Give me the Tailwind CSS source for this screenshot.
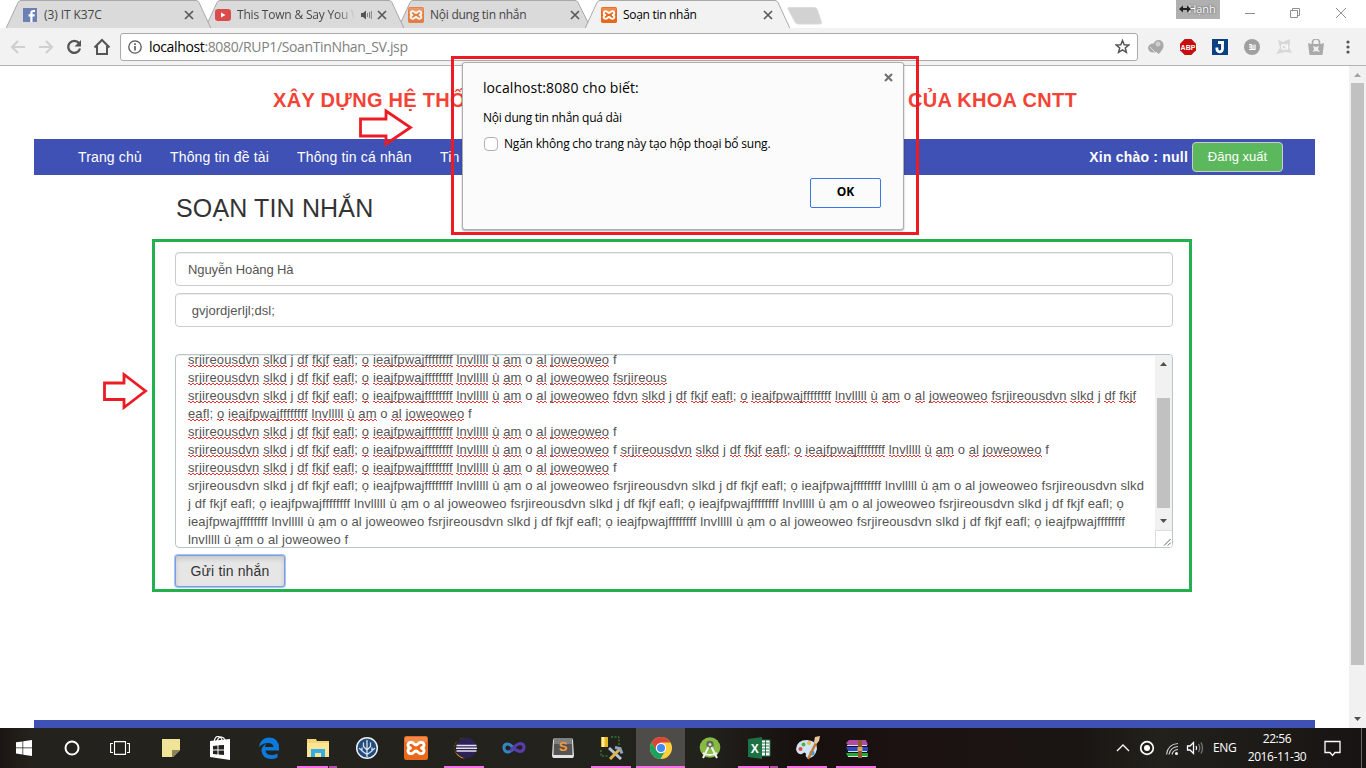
<!DOCTYPE html>
<html lang="vi">
<head>
<meta charset="utf-8">
<title>Soạn tin nhắn</title>
<script src="https://cdn.jsdelivr.net/npm/@tailwindcss/browser@4"></script>
</head>
<body class="relative flex h-[768px] w-[1366px] flex-col overflow-hidden bg-white font-['Liberation_Sans',sans-serif]">

<svg width="0" height="0" class="absolute">
  <defs>
    <symbol id="xampp" viewBox="0 0 24 24">
      <rect width="24" height="24" rx="2.500" fill="#e8681c"/>
      <path d="M1 1h22v5q-11 3-22 0z" fill="#f29a62" opacity=".7"/>
      <path d="M8 6.500C3 5.500 3 11 6.500 12C3 13 3 18.500 8 17.500C10 17 10.500 15 12 15C13.500 15 14 17 16 17.500C21 18.500 21 13 17.500 12C21 11 21 5.500 16 6.500C14 7 13.500 9 12 9C10.500 9 10 7 8 6.500z" fill="none" stroke="#fff" stroke-width="2.900" stroke-linejoin="round"/>
    </symbol>
    <symbol id="close" viewBox="0 0 10 10"><path d="M1 1l8 8M9 1l-8 8" stroke="#5a5a5a" stroke-width="1.700"/></symbol>
  </defs>
</svg>

<!-- tab strip -->
<header class="relative h-7 shrink-0 font-['Open_Sans','Noto_Sans',sans-serif] text-xs text-[#444]">
  <svg class="absolute left-0 top-0" width="1366" height="29" viewBox="0 0 1366 29">
    <g stroke="#a9a9a9" fill="#dadada">
      <path d="M398 28.500L410 2.500Q411 .5 413 .5H575Q577 .5 578 2.500L591 28.500z"/>
      <path d="M205 28.500L217 2.500Q218 .5 220 .5H389Q391 .5 392 2.500L404 28.500z"/>
      <path d="M6 28.500L18 2.500Q19 .5 21 .5H196Q198 .5 199 2.500L211 28.500z"/>
      <path d="M0 28.500H1366" fill="none"/>
      <path d="M585 29L597 2.500Q598 .5 600 .5H775Q777 .5 778 2.500L790 28.500V30H585z" fill="#f2f2f2" stroke="none"/>
      <path d="M585 28.500L597 2.500Q598 .5 600 .5H775Q777 .5 778 2.500L790 28.500" fill="none"/>
      <path d="M789 7.500H814Q816 7.500 817 9L821.500 22Q822 24 820 24H798Q796 24 795 22L788 9Q787.500 7.500 789 7.500z" fill="#d2d2d2" stroke="#dcdcdc"/>
    </g>
  </svg>
  <div class="relative flex h-[30px] items-center pl-[15px]">
    <div class="flex w-[193px] items-center pl-2 pr-[14px]">
      <svg width="14" height="14" viewBox="0 0 14 14"><rect width="14" height="14" fill="#6d80b5"/><path d="M9.500 14V8.500h2l.3-2.200H9.500V5q0-1 1.100-1H12V2Q7.300 1.300 7.300 4.600v1.700H5.500v2.200h1.800V14z" fill="#fff"/></svg>
      <span class="ml-[7px] flex-1 tracking-[-0.1px]">(3) IT K37C</span>
      <svg width="10" height="10"><use href="#close"/></svg>
    </div>
    <div class="flex w-[193px] items-center pl-[7px] pr-[14px]">
      <svg width="16" height="12" viewBox="0 0 16 12"><rect width="16" height="12" rx="3" fill="#dc4b4b"/><path d="M6 3.500v5L10.500 6z" fill="#fff"/></svg>
      <span class="ml-1.5 w-[117px] overflow-hidden whitespace-nowrap bg-gradient-to-r from-[#444] from-85% to-[#ccc] bg-clip-text tracking-[-0.2px] text-transparent">This Town &amp; Say You W</span>
      <svg class="ml-[7px]" width="11" height="10" viewBox="0 0 11 10"><path d="M0 3h2l3-2.500v9L2 7H0z" fill="#555"/><path d="M6.500 3v4M8.500 2v6M10.300 1v8" stroke="#777" stroke-width=".9"/></svg>
      <svg class="ml-auto" width="10" height="10"><use href="#close"/></svg>
    </div>
    <div class="flex w-[193px] items-center pl-[7px] pr-[14px]">
      <svg width="16" height="16" opacity=".8"><use href="#xampp"/></svg>
      <span class="ml-1.5 flex-1 tracking-[-0.25px]">Nội dung tin nhắn</span>
      <svg width="10" height="10"><use href="#close"/></svg>
    </div>
    <div class="flex w-[193px] items-center pl-[7px] pr-[14px]">
      <svg width="16" height="16"><use href="#xampp"/></svg>
      <span class="ml-1.5 flex-1 tracking-[-0.3px] text-black">Soạn tin nhắn</span>
      <svg width="10" height="10"><use href="#close"/></svg>
    </div>
  </div>
  <div class="absolute left-[1176px] top-0 flex h-[19px] w-11 items-center justify-center bg-[#b0b0b0] pl-2 text-[11px] text-white [text-shadow:0_0_2px_#333]">Hạnh
    <svg class="absolute left-[3px] top-[4px]" width="12" height="10" viewBox="0 0 12 10"><path d="M0 5L4 1.500V4H8V1.500L12 5 8 8.500V6H4v2.500z" fill="#222"/></svg>
  </div>
  <svg class="absolute left-[1240px] top-[6px]" width="112" height="14" viewBox="0 0 112 14" fill="none" stroke="#909090"><path d="M5 7.500h10M50.500 4.500h7v7h-7zM52.500 4.500v-2h7v7h-2M96 2l10 10M106 2l-10 10"/></svg>
</header>

<!-- toolbar -->
<div class="relative flex h-[38px] shrink-0 items-center border-b border-[#b3b3b3] bg-[#f2f2f2] pl-[10px] pr-[10px]">
  <svg width="102" height="18" viewBox="0 0 102 18" fill="none" stroke-width="2">
    <g stroke="#cfcfcf"><path d="M15 9H2M8 3L2 9l6 6M29 9h13M36 3l6 6-6 6"/></g>
    <path d="M69 5.200A6 6 0 1 0 70 10.500" stroke="#555" stroke-width="2.300"/><path d="M71 2v6.500h-6.500z" fill="#555"/>
    <path d="M84.500 9.500L92 2l7.500 7.500M87 8v8h10V8" stroke="#555"/>
  </svg>
  <div class="ml-2 flex h-[28px] w-[1018px] items-center rounded-[3px] border border-[#aaa] bg-white px-[7px]">
    <svg width="14" height="14" viewBox="0 0 14 14"><circle cx="7" cy="7" r="6.200" fill="none" stroke="#555" stroke-width="1.300"/><path d="M7 6v4.500M7 3.300v1.600" stroke="#555" stroke-width="1.600"/></svg>
    <span class="ml-[7px] flex-1 font-['Open_Sans','Noto_Sans',sans-serif] text-sm tracking-[-0.36px] text-[#808080]"><span class="text-black">localhost</span>:8080/RUP1/SoanTinNhan_SV.jsp</span>
    <svg width="15" height="15" viewBox="0 0 15 15"><path d="M7.500 1.500l1.700 4.200 4.500.3-3.400 2.900 1.100 4.400-3.900-2.400-3.900 2.400 1.100-4.400L1.300 6l4.500-.3z" fill="none" stroke="#555" stroke-width="1.500"/></svg>
  </div>
  <div class="ml-[10px] flex items-center gap-4">
    <svg width="16" height="16" viewBox="0 0 16 16"><ellipse cx="5.500" cy="9" rx="5.500" ry="4.500" fill="#aaa"/><path d="M10.500 15Q5 10 5.500 6a5 5 0 0 1 10 0q.5 4-5 9z" fill="#a8a8a8"/><circle cx="10" cy="5" r="2.500" fill="#cfcfcf"/><path d="M2 8l5 5" stroke="#ddd"/></svg>
    <svg width="16" height="16" viewBox="0 0 16 16"><path d="M4.700 0h6.600L16 4.700v6.600L11.300 16H4.700L0 11.300V4.700z" fill="#c70d0d"/><text x="8" y="10.700" font-size="7" font-weight="bold" fill="#fff" text-anchor="middle" font-family="Liberation Sans">ABP</text></svg>
    <svg width="16" height="16" viewBox="0 0 16 16"><rect width="16" height="16" fill="#0b4182"/><path d="M6 3.500h6M10.500 3v7a2.800 2.800 0 0 1-5.600 0V8.500" fill="none" stroke="#fff" stroke-width="2.800"/></svg>
    <svg width="16" height="16" viewBox="0 0 16 16"><circle cx="8" cy="8" r="8" fill="#a0a0a0"/><path d="M5 5.700h2.200v5M5 8h2M9 5.700v5M11 5.500v5.200M5 10.500h6.500" stroke="#fff" fill="none" stroke-width="1.200"/></svg>
    <svg width="16" height="16" viewBox="0 0 16 16"><path d="M2 1l5 2 7-3v5l-1 3 3 6-6-1-10 2 4-6z" fill="#d8d8d8"/><circle cx="8" cy="8" r="2.300" fill="none" stroke="#f8f8f8" stroke-width="1.500"/><path d="M11.500 5v6" stroke="#f8f8f8" stroke-width="1.200"/></svg>
    <svg width="16" height="16" viewBox="0 0 16 16"><path d="M4.500 5V3.500a3.500 3.500 0 0 1 7 0V5" fill="none" stroke="#aaa" stroke-width="1.700"/><path d="M0 4l3 1h10l3-1-1.500 12h-13z" fill="#aaa"/><path d="M5 7l3 1 3-1-1 3 2 3-4-1-3 1 1-3z" fill="#eee"/></svg>
    <svg class="ml-[6px]" width="4" height="14" viewBox="0 0 4 14" fill="#555"><circle cx="2" cy="2" r="1.600"/><circle cx="2" cy="7" r="1.600"/><circle cx="2" cy="12" r="1.600"/></svg>
  </div>
</div>

<!-- page viewport -->
<div class="flex h-[662px] shrink-0">
  <main class="flex w-[1349px] flex-col pl-[34px] pr-[34px]">
    <h1 class="flex h-[73px] items-center justify-between pb-[6px] pl-[239px] pr-[238px] text-xl font-bold tracking-[0.3px] text-[#f44336]"><span>XÂY DỰNG HỆ THỐNG</span><span>CỦA KHOA CNTT</span></h1>
    <nav class="flex h-9 items-center bg-[#3f51b5] pl-11 pr-8 text-sm tracking-[0.15px] text-white">
      <a class="w-[92px]">Trang chủ</a><a class="w-[127px]">Thông tin đề tài</a><a class="w-[143px]">Thông tin cá nhân</a><a>Tin nhắn</a>
      <span class="ml-auto font-bold tracking-[0.2px]">Xin chào : null</span>
      <button class="ml-1 h-[30px] w-[91px] rounded border border-[#ccc] bg-[#5cb85c] text-[13px] tracking-normal">Đăng xuất</button>
    </nav>
    <section class="mx-[141px] flex flex-col text-[13px] text-[#555]">
      <h2 class="flex h-[65px] items-center pl-px pt-0.5 text-[25px] tracking-[0.15px] text-[#333]">SOẠN TIN NHẮN</h2>
      <div class="mt-3 flex h-[34px] w-[998px] items-center rounded border border-[#ccc] px-3 pt-0.5 tracking-[-0.1px] shadow-[inset_0_1px_1px_rgba(0,0,0,.075)]">Nguyễn Hoàng Hà</div>
      <div class="mt-[7px] flex h-[34px] w-[998px] items-center whitespace-pre rounded border border-[#ccc] px-3 pt-0.5 tracking-[0.05px] shadow-[inset_0_1px_1px_rgba(0,0,0,.075)]"> gvjordjerljl;dsl;</div>
      <div class="mt-[27px] flex h-[194px] w-[998px] overflow-hidden rounded border border-[#b8c4ce] shadow-[inset_0_1px_1px_rgba(0,0,0,.075)]">
        <div id="message" class="-mt-1 w-[979px] whitespace-pre pl-3 leading-[18px] tracking-[0.115px]"></div>
        <div class="flex w-[17px] shrink-0 flex-col bg-[#f1f1f1]">
          <svg width="17" height="43" viewBox="0 0 17 43"><path d="M5 11h7L8.500 7z" fill="#505050"/></svg>
          <div class="mx-0.5 h-[110px] bg-[#c1c1c1]"></div>
          <svg width="17" height="22" viewBox="0 0 17 22"><path d="M5 11h7l-3.500 4z" fill="#505050"/></svg>
          <svg class="border-l border-t border-[#ddd] bg-white" width="17" height="17" viewBox="0 0 17 17"><path d="M8.500 15.500l7-7M12.500 15.500l3-3" stroke="#555"/></svg>
        </div>
      </div>
      <button class="mt-[7px] h-8 w-[110px] rounded-[3px] border border-[#7b9fdb] bg-[#e6e6e6] text-sm tracking-[0.15px] text-[#333] shadow-[0_0_0_1px_#a5c4f5,inset_0_3px_5px_rgba(0,0,0,.125)]">Gửi tin nhắn</button>
    </section>
    <footer class="mt-auto h-2 bg-[#3f51b5]"></footer>
  </main>
  <div class="flex w-[17px] flex-col items-center bg-[#f1f1f1]">
    <svg width="17" height="17" viewBox="0 0 17 17"><path d="M5 11h7l-3.500-4z" fill="#a3a3a3"/></svg>
    <div class="h-[582px] w-[13px] bg-[#c1c1c1]"></div>
    <svg class="mt-auto" width="17" height="17" viewBox="0 0 17 17"><path d="M5 6h7l-3.500 4z" fill="#505050"/></svg>
  </div>
</div>

<!-- taskbar -->
<div class="relative flex h-10 shrink-0 bg-[linear-gradient(90deg,#1c1513_0,#24221c_30px,#22221d_700px,#17100e_800px,#1b1211_900px,#1a1512_1080px,#22211c_1160px,#171312_1366px)] font-['Open_Sans','Noto_Sans',sans-serif] text-xs text-white">
  <div class="mr-[2px] flex">
    <div class="grid w-12 place-items-center"><svg width="16" height="16" viewBox="0 0 16 16" fill="#fff"><path d="M0 2.300l6.500-.9v6.200H0zM7.200 1.300L16 0v7.600H7.200zM0 8.300h6.500v6.200L0 13.600zM7.200 8.300H16V16l-8.800-1.200z"/></svg></div>
    <div class="grid w-12 place-items-center"><svg width="16" height="16" viewBox="0 0 16 16"><circle cx="8" cy="8" r="6.500" fill="none" stroke="#fff" stroke-width="2"/></svg></div>
    <div class="grid w-12 place-items-center"><svg width="20" height="14" viewBox="0 0 20 14" fill="none" stroke="#fff" stroke-width="1.100"><path d="M4.500.6h11v12.800h-11zM3 2.500H.6v9H3M17 2.500h2.400v9H17"/></svg></div>
  </div>
  <div class="flex [&>div]:relative [&>div]:grid [&>div]:w-[49px] [&>div]:place-items-center [&>div]:pb-px">
    <div><svg width="24" height="24" viewBox="0 0 24 24"><path d="M3 3h18v11l-7 7H3z" fill="#f0e498"/><path d="M21 14h-8v7h1z" fill="#8b8458"/></svg></div>
    <div><svg width="24" height="24" viewBox="0 0 24 24"><path d="M2 5l20-2v21L2 21z" fill="#fff"/><path d="M6 6Q7 .5 10 .5T14 4M9 5Q11 .5 13.500 1T17 4" stroke="#fff" fill="none" stroke-width="1.200"/><path d="M5 10l4.500-.5v4H5zM10.500 9.300L16 9v4.500h-5.500zM5 14.500h4.500v4L5 18zM10.500 14.500H16V19l-5.500-.5z" fill="#24221c"/></svg></div>
    <div><svg width="24" height="24" viewBox="0 0 24 24"><path d="M2 11Q3.500 1.500 12.500 1.500Q22 2 22 12v2.500H8.500q.5 4.500 6 4.500q3 0 6-1.500v4q-3 1.500-7 1.500q-8-.5-9-8q0-5 5-7.500q-1.500 1.500-1.500 3.500h8.500q-.3-4-5.500-4Q6 7 2 11z" fill="#0a7bdc"/></svg></div>
    <div><svg width="24" height="24" viewBox="0 0 24 24"><path d="M1 3h9l1 2h12v16H1z" fill="#f5d477"/><path d="M1 7h22v14H1z" fill="#fee594"/><path d="M5 21v-8h14v8h-4v-4H9v4z" fill="#34ade6"/></svg><i class="absolute bottom-0 left-1 h-0.5 w-[31px] bg-[#f571e3]"></i><i class="absolute bottom-0 left-[36px] h-0.5 w-[8px] bg-[#b94fab]"></i></div>
    <div><svg width="24" height="24" viewBox="0 0 24 24"><circle cx="12" cy="12" r="10.300" fill="#234b7c" stroke="#e8eef5" stroke-width="1.500"/><path d="M12 21V4.500M12 18.500l-5-3.500v-3M12 18.500l5-3.500v-3M12 14L8.500 10.500V7M12 14l3.500-3.500V7M7 14.500l-2.500-2M17 14.500l2.500-2" stroke="#d5e2f2" fill="none" stroke-width="1.300" stroke-linecap="round"/></svg></div>
    <div><svg width="24" height="24"><use href="#xampp"/></svg></div>
    <div><svg width="24" height="24" viewBox="0 0 24 24"><path d="M12 1.500A10.500 10.500 0 0 0 12 22.500Q0 18 1.500 10Q3 2.500 12 1.500z" fill="#f7941e"/><circle cx="13.500" cy="12" r="10.200" fill="#2c2255"/><path d="M3.500 9.500h20M3 12.200h21M3.500 15h20" stroke="#e5e3ee" stroke-width="1.500"/></svg><i class="absolute bottom-0 left-1 h-0.5 w-10 bg-[#f571e3]"></i></div>
    <div><svg width="24" height="24" viewBox="0 0 24 24" fill="none" stroke-width="3"><path d="M12 12.500Q8 7.500 5 8Q1.500 8.500 2 12.500Q3 16.500 6.500 16Q9 15.500 12 12.500" stroke="#3287c2"/><path d="M8 15Q15 7.500 18.500 7.500Q22.500 8 22 12Q21 15.500 18 15.500Q15 15 12 12.500" stroke="#5a3bb0"/></svg></div>
    <div><svg width="24" height="24" viewBox="0 0 24 24"><path d="M2 4l1-2h18l1 2 1 16-1 2H2l-1-2z" fill="#e4e4e4"/><path d="M3 2h18l.5 17h-19z" fill="#555"/><path d="M3 2h18v6H3z" fill="#808080"/><text x="12" y="14.500" font-size="13" font-weight="bold" fill="#f89b3a" text-anchor="middle" font-family="Liberation Sans">S</text></svg></div>
    <div><svg width="24" height="24" viewBox="0 0 24 24"><path d="M1 1h7v10H1z" fill="#e8b820"/><path d="M2 1h2.500v10H2z" fill="#fff0a0"/><path d="M11 1h8v8M1 14v6h8" fill="none" stroke="#3aa03a" stroke-dasharray="2 1.500"/><path d="M9 12l12 11" stroke="#b5c4d5" stroke-width="3"/><path d="M20 13L10 23" stroke="#dfb34a" stroke-width="3"/><path d="M15 11.500l5 1 2 5" stroke="#8fa5bc" stroke-width="3" fill="none"/></svg><i class="absolute bottom-0 left-1 h-0.5 w-10 bg-[#f571e3]"></i></div>
    <div class="bg-[#4d4c48]"><svg width="22" height="22" viewBox="0 0 22 22"><circle cx="11" cy="11" r="11" fill="#fdd03b"/><path d="M1.500 5.500A11 11 0 0 1 20.500 5.500H11L6.500 13.500z" fill="#db4437"/><path d="M1.500 5.500A11 11 0 0 0 10.500 22L15 14l-8.500-.5z" fill="#1aa260"/><circle cx="11" cy="11" r="5.200" fill="#fff"/><circle cx="11" cy="11" r="4" fill="#4688f1"/></svg><i class="absolute bottom-0 left-0 h-0.5 w-[49px] bg-[#f571e3]"></i></div>
    <div><svg width="24" height="24" viewBox="0 0 24 24"><circle cx="12" cy="11.500" r="10.300" fill="#88b943"/><circle cx="12" cy="8.500" r="3.700" fill="#5c6b57"/><circle cx="12" cy="8.500" r="1.500" fill="#ddd"/><path d="M10.500 11L5 22M13.500 11L19 22M5 17q7 4 14 0" stroke="#f2f2f2" stroke-width="2" fill="none"/></svg></div>
    <div><svg width="24" height="24" viewBox="0 0 24 24"><path d="M14 4h9v16h-9z" fill="#fff" stroke="#207245"/><path d="M14 7h8M14 10h8M14 13h8M14 16h8M18.500 4v16" stroke="#207245"/><path d="M1 3l14-2v22L1 21z" fill="#1e7145"/><text x="7.700" y="16.500" font-size="12" font-weight="bold" fill="#fff" text-anchor="middle" font-family="Liberation Sans">X</text></svg><i class="absolute bottom-0 left-1 h-0.5 w-[31px] bg-[#f571e3]"></i><i class="absolute bottom-0 left-[36px] h-0.5 w-[8px] bg-[#b94fab]"></i></div>
    <div><svg width="24" height="24" viewBox="0 0 24 24"><path d="M0 13Q1 4 11 4Q22 5 21 13Q19 22 12 22Q9 21 10 18Q9 15 6 18Q1 19 0 13z" fill="#cfe5f3"/><circle cx="4.500" cy="13" r="2" fill="#e8453c"/><circle cx="7.500" cy="8.500" r="2" fill="#4caf50"/><circle cx="13" cy="7" r="2" fill="#f4b63f"/><circle cx="16" cy="17" r="2.500" fill="#3f9fd4"/><path d="M12 23L21 5" stroke="#c47a35" stroke-width="2.500"/><path d="M18 6l1-5 5-1-1 5-3 3z" fill="#e9c79b"/></svg><i class="absolute bottom-0 left-1 h-0.5 w-10 bg-[#f571e3]"></i></div>
    <div><svg width="24" height="24" viewBox="0 0 24 24"><path d="M1 7l3-3h17l2 5H3z" fill="#b04aa3"/><path d="M1 11h22v4H3z" fill="#2848c8"/><path d="M1 17h22v4H3z" fill="#22a838"/><path d="M2 9.500h20M3 15.500h19M3 20.500h19" stroke="#ddd"/><path d="M13 4h4v18h-4z" fill="#8b5a2b"/><path d="M12.500 11h5v4h-5z" fill="#d9a35b"/></svg><i class="absolute bottom-0 left-1 h-0.5 w-10 bg-[#f571e3]"></i></div>
  </div>
  <div class="ml-auto flex items-center pr-1">
    <svg width="90" height="18" viewBox="0 0 90 18" fill="none" stroke="#fff" stroke-width="1.300">
      <path d="M3 12l6-6 6 6"/>
      <circle cx="33" cy="9" r="6.300" stroke-width="1.700"/><circle cx="33" cy="9" r="3" fill="#fff" stroke="none"/>
      <g stroke="#ccc" stroke-width="1.200"><path d="M52.500 15.500Q54 5 64 4.500M55 15.500Q56.500 8 64 7.500M58 15.500Q59 11 64 10.500"/></g><circle cx="62.500" cy="14.500" r="1.500" fill="#fff" stroke="none"/>
      <path d="M73.500 7h2.500l3.500-3.500v11L76 11h-2.500z"/><path d="M82 7q1.300 2 0 4"/><path d="M84.500 5q2.500 4 0 8M87 3.500q3 5.500 0 11" stroke="#777"/>
    </svg>
    <span class="ml-[9px] w-[34px] tracking-[-0.3px]">ENG</span>
    <div class="w-[60px] whitespace-nowrap text-center leading-[18px] tracking-[-0.4px]">22:56<br>2016-11-30</div>
    <svg class="ml-[17px]" width="18" height="17" viewBox="0 0 18 17"><path d="M1 1.500h15v11h-5l-2.500 3-2.500-3H1z" fill="none" stroke="#fff" stroke-width="1.300"/></svg>
    <div class="ml-[19px] h-10 w-px bg-[#6b6866]"></div>
  </div>
</div>

<!-- alert dialog -->
<div class="absolute left-[462px] top-[62px] flex h-[168px] w-[442px] flex-col rounded-[3px] border border-[#adadad] bg-[#fbfbfb] pl-5 pr-[22px] font-['Open_Sans','Noto_Sans',sans-serif] text-xs text-black shadow-[0_1px_2px_rgba(0,0,0,.35)]">
  <svg class="absolute right-[10px] top-[10px]" width="9" height="9" viewBox="0 0 9 9"><path d="M1 1l7 7M8 1L1 8" stroke="#707070" stroke-width="2.100"/></svg>
  <div class="mt-[15px] text-sm leading-5 tracking-[0.08px]">localhost:8080 cho biết:</div>
  <div class="mt-[12px] leading-4 tracking-[-0.26px]">Nội dung tin nhắn quá dài</div>
  <label class="mt-[8px] flex h-5 items-center tracking-[-0.2px]"><span class="mr-[6px] ml-px h-[14px] w-[14px] rounded-sm border border-[#b0b0b0] bg-white"></span>Ngăn không cho trang này tạo hộp thoại bổ sung.</label>
  <button class="ml-auto mt-6 h-[30px] w-[71px] rounded-[2px] border border-[#3b78e7] pb-0.5 text-xs font-bold">OK</button>
</div>

<!-- annotations -->
<div class="absolute left-[451px] top-[56px] h-[179px] w-[468px] border-3 border-[#ed1c24]"></div>
<div class="absolute left-[152px] top-[239px] h-[353px] w-[1040px] border-3 border-[#22b14c]"></div>
<svg class="absolute left-[359px] top-[108px]" width="54" height="39" viewBox="0 0 54 39"><path d="M1.500 11H27V3L51.500 19.500 27 36V28H1.500z" fill="none" stroke="#ed1c24" stroke-width="2.800"/></svg>
<svg class="absolute left-[102px] top-[371px]" width="48" height="40" viewBox="0 0 48 40"><path d="M2.500 12H22V3.500L43.500 20 22 36.500V28.500H2.500z" fill="none" stroke="#ed1c24" stroke-width="2.800"/></svg>

<script>
const a = "srjireousdvn slkd j df fkjf eafl; ọ ieajfpwajffffffff lnvlllll ù ạm o al joweoweo f";
const tail = " j df fkjf eafl; ọ ieajfpwajffffffff lnvlllll ù ạm o al joweoweo f";
const lines = [
  [a, 1],
  [a + "srjireous", 1],
  [a + "dvn slkd" + tail + "srjireousdvn slkd j df fkjf", 1],
  ["eafl; ọ ieajfpwajffffffff lnvlllll ù ạm o al joweoweo f", 1],
  [a, 1],
  [a + " " + a, 1],
  [a, 1],
  [a + a + "srjireousdvn slkd", 0],
  ["j df fkjf eafl; ọ ieajfpwajffffffff lnvlllll ù ạm o al joweoweo f" + a + "srjireousdvn slkd j df fkjf eafl; ọ", 0],
  ["ieajfpwajffffffff lnvlllll ù ạm o al joweoweo f" + a + "srjireousdvn slkd j df fkjf eafl; ọ ieajfpwajffffffff", 0],
  ["lnvlllll ù ạm o al joweoweo f", 0]
];
const box = document.getElementById("message");
for (const [text, checked] of lines) {
  const row = document.createElement("div");
  row.className = "h-[18px]";
  text.split(/([ ;])/).forEach(w => {
    const misspelt = checked && w.length && !/^([ ;jof])$/.test(w);
    const node = document.createElement("span");
    if (misspelt) node.className = "[background-image:linear-gradient(90deg,#f03030_50%,transparent_50%),linear-gradient(90deg,transparent_50%,#f03030_50%)] [background-size:4px_1px] [background-position:0_calc(100%-1px),0_100%] bg-repeat-x";
    node.textContent = w;
    row.append(node);
  });
  box.append(row);
}
</script>
</body>
</html>
